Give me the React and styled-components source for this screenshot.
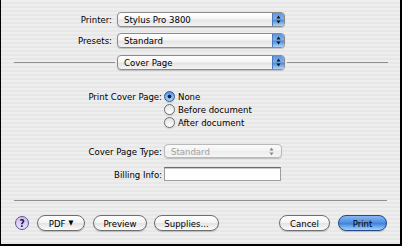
import React from "react";
import styled, { createGlobalStyle } from "styled-components";

const GlobalStyle = createGlobalStyle`
  html, body {
    margin: 0;
    padding: 0;
    background: #ffffff;
  }
  body {
    font-family: "DejaVu Sans Condensed", "DejaVu Sans", sans-serif;
  }
`;

const Sheet = styled.div`
  box-sizing: border-box;
  width: 402px;
  height: 246px;
  border-left: 1px solid #000;
  border-right: 2px solid #000;
  border-bottom: 2px solid #000;
  background: repeating-linear-gradient(
    to bottom,
    #eeeeee 0px,
    #eeeeee 2px,
    #e7e7e7 2px,
    #e7e7e7 4px
  );
  font-size: 9.5px;
  color: #000;
  display: flex;
  flex-direction: column;
`;

const Row = styled.div`
  display: flex;
  align-items: center;
  height: ${(p) => p.$h || 15}px;
  margin-top: ${(p) => p.$top || 0}px;
`;

const Label = styled.div`
  width: ${(p) => p.$w}px;
  flex: none;
  text-align: right;
  margin-right: ${(p) => p.$gap ?? 5}px;
  white-space: nowrap;
`;

const Popup = styled.div`
  box-sizing: border-box;
  display: flex;
  align-items: center;
  flex: none;
  width: ${(p) => p.$w}px;
  height: ${(p) => p.$h || 15}px;
  border: 1px solid ${(p) => (p.$disabled ? "#b9b9b9" : "#8a8a8a")};
  border-radius: 4px;
  background: ${(p) =>
    p.$disabled
      ? "linear-gradient(#fbfbfb, #f3f3f3 50%, #ececec 51%, #f6f6f6)"
      : "linear-gradient(#ffffff, #f5f5f5 45%, #e4e4e4 55%, #f4f4f4)"};
  color: ${(p) => (p.$disabled ? "#a3a3a3" : "#000")};
  padding-left: 6px;
  box-shadow: 0 1px 1px rgba(0, 0, 0, 0.18);
  overflow: hidden;
  white-space: nowrap;
`;

const PopupArrows = styled.div`
  margin-left: auto;
  align-self: stretch;
  width: 11px;
  display: flex;
  align-items: center;
  justify-content: center;
  border-left: 1px solid ${(p) => (p.$disabled ? "transparent" : "#4f78b6")};
  background: ${(p) =>
    p.$disabled
      ? "transparent"
      : "linear-gradient(#5d95dc, #7fb2ec 45%, #4f8bd8 55%, #a9d6fb)"};
  margin-right: ${(p) => (p.$disabled ? 4 : 0)}px;
`;

const Arrows = ({ color }) => (
  <svg width="5" height="9" viewBox="0 0 5 9">
    <path d="M2.5 0.5 L4.5 3.5 L0.5 3.5 Z" fill={color} />
    <path d="M2.5 8.5 L4.5 5.5 L0.5 5.5 Z" fill={color} />
  </svg>
);

const SeparatorRow = styled.div`
  display: flex;
  align-items: center;
  height: 15px;
  margin-top: 7px;
  padding-left: 13px;
`;

const Line = styled.div`
  flex: ${(p) => (p.$grow ? "1" : "none")};
  width: ${(p) => (p.$w ? `${p.$w}px` : "auto")};
  height: 1px;
  background: #8f8f8f;
  margin: ${(p) => p.$margin || "0"};
`;

const RadioOption = styled.div`
  display: flex;
  align-items: center;
  white-space: nowrap;
`;

const RadioDot = styled.span`
  box-sizing: border-box;
  width: 11px;
  height: 11px;
  flex: none;
  border-radius: 50%;
  margin-right: 3px;
  border: 1px solid ${(p) => (p.$on ? "#2e5a9a" : "#6d6d6d")};
  background: ${(p) =>
    p.$on
      ? "radial-gradient(circle at 50% 50%, #10213f 0 1.6px, transparent 2.2px), linear-gradient(#5c93da, #a6d2fa)"
      : "linear-gradient(#e3e3e3, #ffffff)"};
  box-shadow: 0 1px 1px rgba(0, 0, 0, 0.12);
`;

const TextField = styled.div`
  box-sizing: border-box;
  width: 117px;
  height: 14px;
  background: #ffffff;
  border: 1px solid #9d9d9d;
  border-top-color: #6d6d6d;
  box-shadow: inset 0 1px 0 #c9c9c9;
`;

const BottomLine = styled.div`
  height: 1px;
  background: #8f8f8f;
  margin: 19px 13px 0 13px;
`;

const ButtonBar = styled.div`
  display: flex;
  align-items: center;
  margin-top: 14px;
  height: 16px;
  padding: 0 13px 0 14px;
`;

const HelpButton = styled.div`
  box-sizing: border-box;
  width: 14px;
  height: 14px;
  border-radius: 50%;
  border: 1px solid #5e5490;
  background: linear-gradient(#cbbff0, #e9e2fb);
  display: flex;
  align-items: center;
  justify-content: center;
  font-weight: bold;
  font-size: 10px;
  color: #1b1340;
  margin-right: 8px;
`;

const Button = styled.div`
  box-sizing: border-box;
  width: ${(p) => p.$w}px;
  height: 16px;
  border-radius: 8px;
  margin-right: ${(p) => p.$mr || 0}px;
  display: flex;
  align-items: center;
  justify-content: center;
  white-space: nowrap;
  border: 1px solid ${(p) => (p.$primary ? "#24488a" : "#6e6e6e")};
  background: ${(p) =>
    p.$primary
      ? "linear-gradient(#88b8ef, #4b8ce0 50%, #3a7fd9 51%, #a3d3fb)"
      : "linear-gradient(#ffffff, #f3f3f3 50%, #e3e3e3 51%, #fbfbfb)"};
  box-shadow: 0 1px 1px rgba(0, 0, 0, 0.2);
  color: #000;
`;

const Spacer = styled.div`
  flex: 1;
`;

const Caret = styled.span`
  font-size: 7px;
  margin-left: 3px;
`;

function PopupMenu({ value, width, height, disabled }) {
  return (
    <Popup $w={width} $h={height} $disabled={disabled}>
      {value}
      <PopupArrows $disabled={disabled}>
        <Arrows color={disabled ? "#8a8a8a" : "#111"} />
      </PopupArrows>
    </Popup>
  );
}

export default function App() {
  return (
    <>
      <GlobalStyle />
      <Sheet>
        <Row $top={12}>
          <Label $w={111}>Printer:</Label>
          <PopupMenu value="Stylus Pro 3800" width={168} />
        </Row>
        <Row $top={6}>
          <Label $w={111}>Presets:</Label>
          <PopupMenu value="Standard" width={168} />
        </Row>
        <SeparatorRow>
          <Line $w={101} $margin="0 2px 0 0" />
          <PopupMenu value="Cover Page" width={168} />
          <Line $w={101} $margin="0 0 0 2px" />
        </SeparatorRow>

        <Row $h={13} $top={20}>
          <Label $w={161} $gap={2}>Print Cover Page:</Label>
          <RadioOption>
            <RadioDot $on />
            None
          </RadioOption>
        </Row>
        <Row $h={13}>
          <Label $w={161} $gap={2} />
          <RadioOption>
            <RadioDot />
            Before document
          </RadioOption>
        </Row>
        <Row $h={13}>
          <Label $w={161} $gap={2} />
          <RadioOption>
            <RadioDot />
            After document
          </RadioOption>
        </Row>

        <Row $h={14} $top={15}>
          <Label $w={161} $gap={2}>Cover Page Type:</Label>
          <PopupMenu value="Standard" width={118} height={14} disabled />
        </Row>
        <Row $h={14} $top={9}>
          <Label $w={161} $gap={2}>Billing Info:</Label>
          <TextField />
        </Row>

        <BottomLine />

        <ButtonBar>
          <HelpButton>?</HelpButton>
          <Button $w={48} $mr={8}>
            PDF<Caret>▼</Caret>
          </Button>
          <Button $w={54} $mr={7}>Preview</Button>
          <Button $w={65}>Supplies...</Button>
          <Spacer />
          <Button $w={51} $mr={8}>Cancel</Button>
          <Button $w={49} $primary>Print</Button>
        </ButtonBar>
      </Sheet>
    </>
  );
}
